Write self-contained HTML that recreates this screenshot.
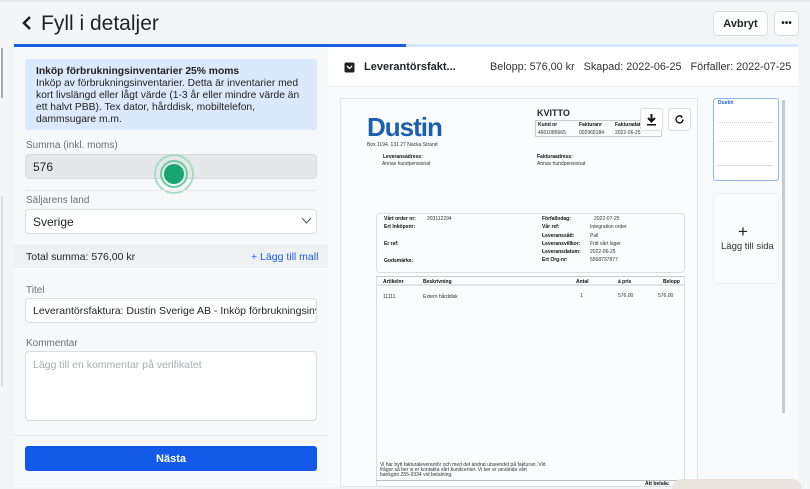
<!DOCTYPE html>
<html><head><meta charset="utf-8"><style>
*{box-sizing:border-box;margin:0;padding:0}
body{width:810px;height:487px;overflow:hidden;background:#f4f5f7;font-family:"Liberation Sans",sans-serif;color:#1f2328;position:relative}
.a{position:absolute}
.lbl{font-size:10px;color:#6b7078}
.inp{border:1px solid #d9dce0;border-radius:4px;background:#fff;font-size:12px;padding-left:7px;display:flex;align-items:center}
.d{font-size:5px;color:#333;position:absolute;white-space:nowrap}
.db{font-size:5px;font-weight:bold;color:#111;position:absolute;white-space:nowrap}
</style></head><body>
<div class="a" style="left:0;top:0;width:810px;height:2px;background:#e8e9eb"></div>
<div class="a" style="top:48px;width:2px;height:50px;background:#aaa;left:1px"></div>
<div class="a" style="left:1px;top:196px;width:2px;height:190px;background:#ddd"></div>
<svg class="a" style="left:21px;top:15px" width="12" height="16" viewBox="0 0 12 16"><path d="M9 2 L3 8 L9 14" stroke="#222" stroke-width="2.6" fill="none"/></svg>
<div class="a" style="left:41px;top:12px;font-size:21px;color:#1f2328">Fyll i detaljer</div>
<div class="a inp" style="left:713px;top:11px;width:55px;height:25px;font-weight:bold;font-size:11px;justify-content:center;padding:0;border-radius:5px">Avbryt</div>
<div class="a inp" style="left:774px;top:11px;width:25px;height:25px;font-weight:bold;justify-content:center;padding:0;border-radius:5px;font-size:10px">•••</div>
<div class="a" style="left:14px;top:44px;width:784px;height:3px;background:#d6e6fb"></div>
<div class="a" style="left:14px;top:44px;width:392px;height:3px;background:#1b5fe0"></div>
<!-- left panel -->
<div class="a" style="left:14px;top:47px;width:314px;height:440px;background:#f7f8fa"></div>
<div class="a" style="left:25px;top:59px;width:292px;height:71px;background:#dbe9fc;border-radius:3px;padding:7px 11px;font-size:10.3px;line-height:12px;color:#222">
<b>Inköp förbrukningsinventarier 25% moms</b><br>Inköp av förbrukningsinventarier. Detta är inventarier med kort livslängd eller lågt värde (1-3 år eller mindre värde än ett halvt PBB). Tex dator, hårddisk, mobiltelefon, dammsugare m.m.</div>
<div class="a lbl" style="left:26px;top:140px">Summa (inkl. moms)</div>
<div class="a inp" style="left:25px;top:154px;width:292px;height:25px;background:#e6e7e9">576</div>
<div class="a" style="left:154px;top:154px;width:40px;height:40px;border-radius:50%;border:2px solid #a7dcc3"></div>
<div class="a" style="left:160px;top:160px;width:28px;height:28px;border-radius:50%;border:2px solid #6fcaa2"></div>
<div class="a" style="left:164px;top:164px;width:20px;height:20px;border-radius:50%;background:#17a673"></div>
<div class="a" style="left:25px;top:190px;width:292px;height:1px;background:#e8e9eb"></div>
<div class="a lbl" style="left:26px;top:195px">Säljarens land</div>
<div class="a inp" style="left:25px;top:209px;width:292px;height:25px">Sverige</div>
<svg class="a" style="left:301px;top:217px" width="11" height="8"><path d="M1 1 L5.5 6 L10 1" stroke="#555" fill="none"/></svg>
<div class="a" style="left:14px;top:245px;width:314px;height:23px;background:#eff0f2"></div>
<div class="a" style="left:26px;top:251px;font-size:10.5px">Total summa: 576,00 kr</div>
<div class="a" style="left:251px;top:251px;font-size:10.5px;color:#1b5fe0">+ Lägg till mall</div>
<div class="a lbl" style="left:26px;top:285px">Titel</div>
<div class="a inp" style="left:25px;top:298px;width:292px;height:25px;font-size:10.5px;overflow:hidden;white-space:nowrap">Leverantörsfaktura: Dustin Sverige AB - Inköp förbrukningsinv</div>
<div class="a lbl" style="left:26px;top:338px">Kommentar</div>
<div class="a inp" style="left:25px;top:351px;width:292px;height:70px;align-items:flex-start;padding-top:7px;font-size:10.5px;color:#a9adb3">Lägg till en kommentar på verifikatet</div>
<div class="a" style="left:14px;top:435px;width:314px;height:1px;background:#e8e9eb"></div>
<div class="a" style="left:25px;top:446px;width:292px;height:25px;background:#1259e8;border-radius:3px;color:#fff;font-weight:bold;font-size:11px;display:flex;align-items:center;justify-content:center">Nästa</div>
<!-- right panel -->
<div class="a" style="left:328px;top:47px;width:470px;height:440px;background:#f9fafb"></div>
<div class="a" style="left:328px;top:47px;width:470px;height:40px;background:#fff;border-bottom:1px solid #eceef0"></div>
<svg class="a" style="left:344px;top:62px" width="11" height="11"><rect x="0.5" y="0.5" width="10" height="10" rx="1.5" fill="#222"/><path d="M3 4 L5.5 6.5 L8 4" stroke="#fff" stroke-width="1.3" fill="none"/></svg>
<div class="a" style="left:364px;top:61px;font-size:11px;font-weight:bold">Leverantörsfakt...</div>
<div class="a" style="left:490px;top:61px;font-size:10.8px;color:#333;white-space:nowrap">Belopp: 576,00 kr&nbsp;&nbsp; Skapad: 2022-06-25&nbsp;&nbsp; Förfaller: 2022-07-25</div>
<!-- document -->
<div class="a" style="left:340px;top:98px;width:358px;height:389px;background:#fbfcfd;border:1px solid #e2e4e7"></div>
<div class="a" style="left:367px;top:112px;font-size:26px;font-weight:bold;color:#1b5fb0;letter-spacing:-1px;line-height:30px">Dustin</div>
<div class="d" style="left:367px;top:142px">Box 1194, 131 27 Nacka Strand</div>
<div class="db" style="left:383px;top:154px">Leveransadress:</div>
<div class="d" style="left:382px;top:161px">Annas hundpensionat</div>
<div class="db" style="left:537px;top:154px">Fakturaadress:</div>
<div class="d" style="left:537px;top:161px">Annas hundpensionat</div>
<div class="a" style="left:537px;top:108px;font-size:9px;font-weight:bold">KVITTO</div>
<div class="a" style="left:535px;top:120px;width:127px;height:17px;border:1px solid #ccc"></div>
<div class="db" style="left:538px;top:122px">Kund nr</div><div class="d" style="left:538px;top:130px">4601085665</div>
<div class="db" style="left:579px;top:122px">Fakturanr</div><div class="d" style="left:579px;top:130px">002965184</div>
<div class="db" style="left:615px;top:122px">Fakturadat</div><div class="d" style="left:615px;top:130px">2022-06-25</div>
<div class="a" style="left:640px;top:108px;width:23px;height:23px;background:#fff;border:1px solid #ddd;border-radius:3px"></div>
<svg class="a" style="left:645px;top:113px" width="13" height="13"><path d="M6.5 1 V8 M3 5 L6.5 8.5 L10 5" stroke="#111" stroke-width="2" fill="none"/><rect x="2" y="11" width="9" height="1.5" fill="#111"/></svg>
<div class="a" style="left:668px;top:108px;width:23px;height:23px;background:#fff;border:1px solid #ddd;border-radius:3px"></div>
<svg class="a" style="left:674px;top:114px" width="11" height="11"><path d="M9 5.5 A3.5 3.5 0 1 1 7.5 2.5" stroke="#111" stroke-width="1.4" fill="none"/><path d="M6.5 1 L9 2.5 L7 4.5" fill="#111"/></svg>
<div class="a" style="left:376px;top:213px;width:309px;height:60px;border:1px solid #ddd;border-radius:4px"></div>
<div class="db" style="left:384px;top:216px">Vårt order nr:</div><div class="d" style="left:427px;top:216px">203112294</div>
<div class="db" style="left:384px;top:224px">Ert Inköpsnr:</div>
<div class="db" style="left:384px;top:241px">Er ref:</div>
<div class="db" style="left:384px;top:258px">Godsmärke:</div>
<div class="db" style="left:542px;top:216px">Förfallodag:</div><div class="d" style="left:594px;top:216px">2022-07-25</div>
<div class="db" style="left:542px;top:224px">Vår ref:</div><div class="d" style="left:590px;top:224px">Integration order</div>
<div class="db" style="left:542px;top:233px">Leveranssätt:</div><div class="d" style="left:590px;top:233px">Pall</div>
<div class="db" style="left:542px;top:241px">Leveransvillkor:</div><div class="d" style="left:590px;top:241px">Fritt vårt lager</div>
<div class="db" style="left:542px;top:249px">Leveransdatum:</div><div class="d" style="left:590px;top:249px">2022-06-25</div>
<div class="db" style="left:542px;top:257px">Ert Org-nr:</div><div class="d" style="left:590px;top:257px">5568737877</div>
<div class="a" style="left:376px;top:276px;width:309px;height:211px;border:1px solid #ddd;border-top:1px solid #ccc"></div>
<div class="a" style="left:377px;top:284px;width:307px;height:2px;background:#e4e4e4"></div>
<div class="db" style="left:383px;top:279px">Artikelnr</div><div class="db" style="left:423px;top:279px">Beskrivning</div>
<div class="db" style="left:576px;top:279px">Antal</div><div class="db" style="left:618px;top:279px">á pris</div><div class="db" style="left:663px;top:279px">Belopp</div>
<div class="d" style="left:383px;top:294px">11111</div><div class="d" style="left:423px;top:294px">Extern hårddisk</div>
<div class="d" style="left:580px;top:293px">1</div><div class="d" style="left:618px;top:293px">576,00</div><div class="d" style="left:658px;top:293px">576,00</div>
<div class="d" style="left:380px;top:463px;line-height:5px">Vi har bytt fakturaleverantör och med det ändrat utseendet på fakturan. Vid<br>frågor så ber vi er kontakta vårt kundcenter. Vi ber er använda vårt<br>bankgiro 255-9334 vid betalning.</div>
<div class="a" style="left:376px;top:480px;width:309px;height:1px;background:#bbb"></div>
<div class="db" style="left:645px;top:481px">Att betala:</div>
<div class="a" style="left:672px;top:479px;width:130px;height:10px;background:#e9e4dd;border-radius:10px 10px 0 0"></div>
<!-- thumbnails -->
<div class="a" style="left:713px;top:98px;width:66px;height:83px;background:#fff;border:1.5px solid #93b8f0;border-radius:3px"></div>
<div class="a" style="left:718px;top:100px;font-size:5px;font-weight:bold;color:#1b64b8">Dustin</div>
<div class="a" style="left:718px;top:122px;width:55px;height:20px;border-top:1px dotted #ccc;border-bottom:1px dotted #ccc"></div>
<div class="a" style="left:718px;top:165px;width:55px;height:10px;border-top:1px solid #ddd"></div>
<div class="a" style="left:713px;top:193px;width:66px;height:91px;background:#fafbfc;border:1px solid #eceef0;border-radius:3px"></div>
<div class="a" style="left:738px;top:222px;font-size:17px;color:#222">+</div>
<div class="a" style="left:721px;top:241px;font-size:9.5px;color:#333">Lägg till sida</div>
<div class="a" style="left:782px;top:100px;width:3px;height:313px;background:#c8cacd"></div>
</body></html>
